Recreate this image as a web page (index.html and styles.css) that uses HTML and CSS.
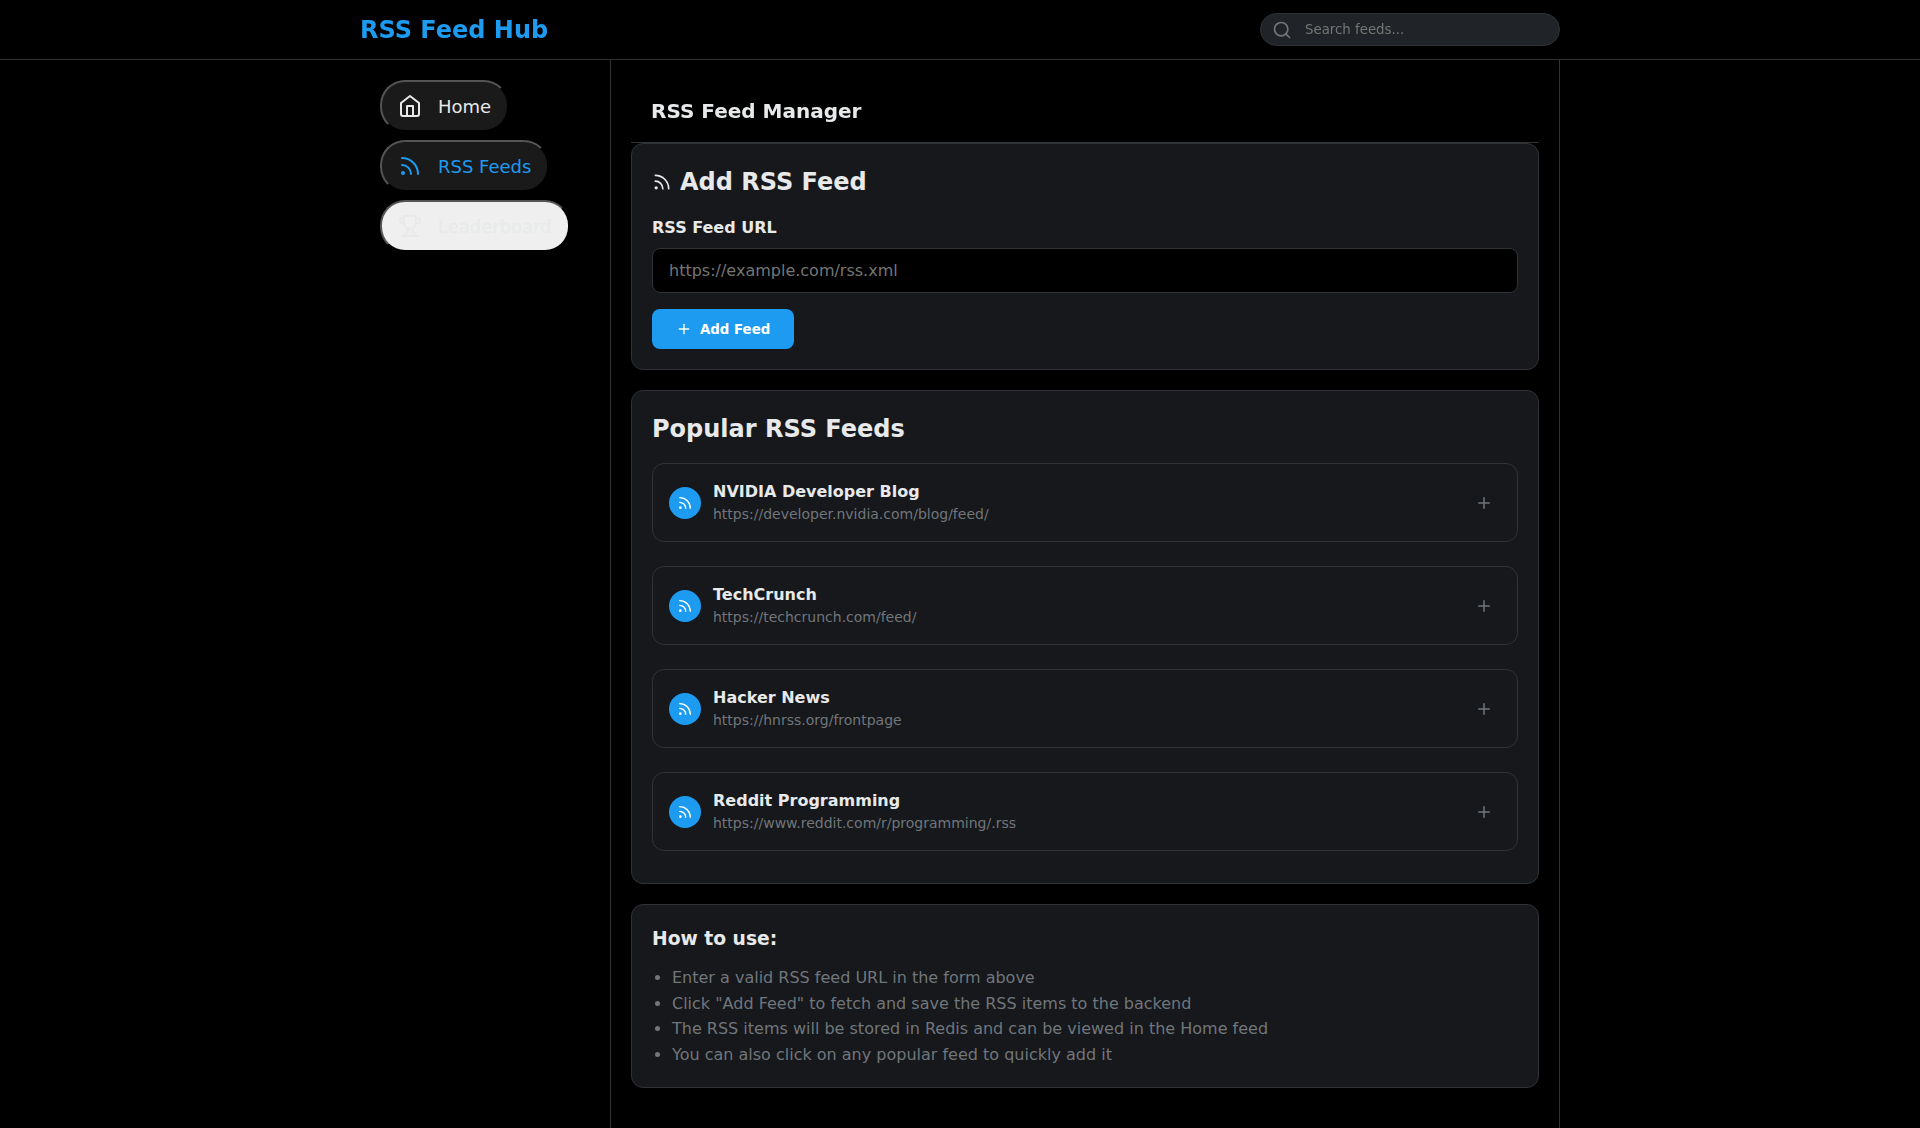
FILE: index.html
```html
<!DOCTYPE html>
<html lang="en">
<head>
<meta charset="UTF-8">
<title>RSS Feed Hub</title>
<link rel="stylesheet" href="styles.css">
</head>
<body>
<svg class="sprite" width="0" height="0" aria-hidden="true">
  <symbol id="i-rss" viewBox="0 0 24 24"><path d="M4 11a9 9 0 0 1 9 9"/><path d="M4 4a16 16 0 0 1 16 16"/><circle cx="5" cy="19" r="1"/></symbol>
  <symbol id="i-home" viewBox="0 0 24 24"><path d="m3 9 9-7 9 7v11a2 2 0 0 1-2 2H5a2 2 0 0 1-2-2z"/><polyline points="9 22 9 12 15 12 15 22"/></symbol>
  <symbol id="i-trophy" viewBox="0 0 24 24"><path d="M6 9H4.5a2.5 2.5 0 0 1 0-5H6"/><path d="M18 9h1.500a2.500 2.500 0 0 0 0-5H18"/><path d="M4 22h16"/><path d="M10 14.660V17c0 .55-.47.98-.97 1.210C7.850 18.750 7 20.240 7 22"/><path d="M14 14.660V17c0 .55.47.98.97 1.210C16.150 18.750 17 20.240 17 22"/><path d="M18 2H6v7a6 6 0 0 0 12 0V2Z"/></symbol>
  <symbol id="i-search" viewBox="0 0 24 24"><circle cx="11" cy="11" r="8"/><path d="m21 21-4.350-4.350"/></symbol>
  <symbol id="i-plus" viewBox="0 0 24 24"><path d="M5 12h14"/><path d="M12 5v14"/></symbol>
</svg>

<header class="header">
  <div class="header-content">
    <div class="logo">RSS Feed Hub</div>
    <div class="search">
      <svg class="icon search-icon" width="20" height="20"><use href="#i-search"/></svg>
      <input class="search-input" type="text" placeholder="Search feeds...">
    </div>
  </div>
</header>

<div class="layout">
  <nav class="sidebar">
    <button class="nav-item"><svg class="icon" width="24" height="24"><use href="#i-home"/></svg><span>Home</span></button>
    <button class="nav-item active"><svg class="icon" width="24" height="24"><use href="#i-rss"/></svg><span>RSS Feeds</span></button>
    <button class="nav-item light"><svg class="icon" width="24" height="24"><use href="#i-trophy"/></svg><span>Leaderboard</span></button>
  </nav>

  <main class="main">
    <div class="page-title"><h2>RSS Feed Manager</h2></div>

    <section class="card">
      <h2 class="card-title"><svg class="icon" width="20" height="20"><use href="#i-rss"/></svg>Add RSS Feed</h2>
      <form>
        <label class="label" for="url">RSS Feed URL</label>
        <input class="url-input" id="url" type="text" placeholder="https://example.com/rss.xml">
        <button class="add-button" type="button"><svg class="icon" width="16" height="16"><use href="#i-plus"/></svg>Add Feed</button>
      </form>
    </section>

    <section class="card">
      <h2 class="card-title">Popular RSS Feeds</h2>
      <div class="feeds">
        <div class="feed">
          <div class="feed-icon"><svg class="icon" width="16" height="16"><use href="#i-rss"/></svg></div>
          <div class="feed-info"><div class="feed-name">NVIDIA Developer Blog</div><div class="feed-url">https://developer.nvidia.com/blog/feed/</div></div>
          <button class="feed-add" aria-label="Add"><svg class="icon" width="18" height="18"><use href="#i-plus"/></svg></button>
        </div>
        <div class="feed">
          <div class="feed-icon"><svg class="icon" width="16" height="16"><use href="#i-rss"/></svg></div>
          <div class="feed-info"><div class="feed-name">TechCrunch</div><div class="feed-url">https://techcrunch.com/feed/</div></div>
          <button class="feed-add" aria-label="Add"><svg class="icon" width="18" height="18"><use href="#i-plus"/></svg></button>
        </div>
        <div class="feed">
          <div class="feed-icon"><svg class="icon" width="16" height="16"><use href="#i-rss"/></svg></div>
          <div class="feed-info"><div class="feed-name">Hacker News</div><div class="feed-url">https://hnrss.org/frontpage</div></div>
          <button class="feed-add" aria-label="Add"><svg class="icon" width="18" height="18"><use href="#i-plus"/></svg></button>
        </div>
        <div class="feed">
          <div class="feed-icon"><svg class="icon" width="16" height="16"><use href="#i-rss"/></svg></div>
          <div class="feed-info"><div class="feed-name">Reddit Programming</div><div class="feed-url">https://www.reddit.com/r/programming/.rss</div></div>
          <button class="feed-add" aria-label="Add"><svg class="icon" width="18" height="18"><use href="#i-plus"/></svg></button>
        </div>
      </div>
    </section>

    <section class="card">
      <h3 class="help-title">How to use:</h3>
      <ul class="help-list">
        <li>Enter a valid RSS feed URL in the form above</li>
        <li>Click "Add Feed" to fetch and save the RSS items to the backend</li>
        <li>The RSS items will be stored in Redis and can be viewed in the Home feed</li>
        <li>You can also click on any popular feed to quickly add it</li>
      </ul>
    </section>
  </main>
</div>
</body>
</html>
```
FILE: styles.css
```css
* { box-sizing: border-box; margin: 0; padding: 0; }

body {
  background: #000;
  color: #e7e9ea;
  font-family: "DejaVu Sans", sans-serif;
  font-size: 16px;
  line-height: 1.5;
}

button, input { font-family: inherit; }

.sprite { position: absolute; }

.icon {
  display: block;
  flex: none;
  fill: none;
  stroke: currentColor;
  stroke-width: 2;
  stroke-linecap: round;
  stroke-linejoin: round;
}

.header {
  position: sticky;
  top: 0;
  z-index: 10;
  height: 60px;
  border-bottom: 1px solid #2f3336;
  background: rgba(0, 0, 0, 0.8);
  backdrop-filter: blur(12px);
}

.header-content {
  display: flex;
  align-items: center;
  justify-content: space-between;
  width: 1200px;
  height: 100%;
  margin: 0 auto;
}

.logo { color: #1d9bf0; font-size: 24px; font-weight: bold; }

.search { position: relative; display: flex; width: 300px; }

.search-icon {
  position: absolute;
  left: 12px;
  top: 50%;
  transform: translateY(-50%);
  color: #71767b;
}

.search-input {
  width: 100%;
  padding: 8px 16px 8px 44px;
  border: 1px solid #2f3336;
  border-radius: 20px;
  background: #202327;
  color: #e7e9ea;
  font-size: 13.3333px;
}

.layout { display: flex; width: 1200px; min-height: 1068px; margin: 0 auto; }

.sidebar {
  display: flex;
  flex-direction: column;
  align-items: flex-start;
  gap: 8px;
  width: 250px;
  padding: 20px;
}

.nav-item {
  display: flex;
  align-items: center;
  gap: 16px;
  padding: 12px 16px;
  border: 2px outset #000;
  border-radius: 25px;
  background: #1a1a1a;
  color: #e7e9ea;
  font-size: 18px;
}

.nav-item.active { color: #1d9bf0; }
.nav-item.light { background: #efefef; }

.main {
  flex: 1;
  padding: 20px;
  border-left: 1px solid #2f3336;
  border-right: 1px solid #2f3336;
}

.page-title {
  position: sticky;
  top: 60px;
  z-index: 5;
  padding: 16px 20px;
  border-bottom: 1px solid #2f3336;
  background: rgba(0, 0, 0, 0.8);
  backdrop-filter: blur(12px);
}

.page-title h2 { font-size: 20px; }

.card {
  margin-bottom: 20px;
  padding: 20px;
  border: 1px solid #2f3336;
  border-radius: 12px;
  background: #16181c;
}

.card-title {
  display: flex;
  align-items: center;
  gap: 8px;
  margin-bottom: 16px;
  font-size: 24px;
}

.label { display: block; margin-bottom: 8px; font-weight: bold; }

.url-input {
  display: block;
  width: 100%;
  margin-bottom: 16px;
  padding: 12px 16px;
  border: 1px solid #2f3336;
  border-radius: 8px;
  background: #000;
  color: #e7e9ea;
  font-size: 16px;
}

.add-button {
  display: flex;
  align-items: center;
  gap: 8px;
  padding: 12px 24px;
  border: none;
  border-radius: 8px;
  background: #1d9bf0;
  color: #fff;
  font-size: 13.3333px;
  font-weight: bold;
}

.feeds { display: flex; flex-direction: column; gap: 12px; }

.feed {
  display: flex;
  align-items: center;
  gap: 12px;
  margin-bottom: 12px;
  padding: 16px;
  border: 1px solid #2f3336;
  border-radius: 12px;
}

.feed-icon {
  display: flex;
  align-items: center;
  justify-content: center;
  width: 32px;
  height: 32px;
  border-radius: 50%;
  background: #1d9bf0;
  color: #fff;
}

.feed-info { flex: 1; }
.feed-name { font-weight: bold; }
.feed-url { color: #71767b; font-size: 14px; }

.feed-add { padding: 8px; border: none; background: none; color: #71767b; }

.help-title { margin-bottom: 12px; font-size: 18.72px; }

.help-list { padding-left: 20px; color: #71767b; line-height: 1.6; }
```
